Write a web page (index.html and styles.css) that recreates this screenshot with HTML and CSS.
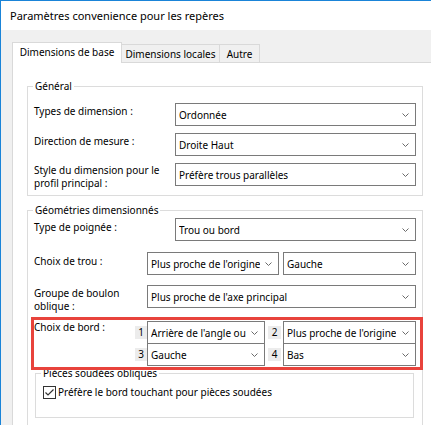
FILE: index.html
```html
<!DOCTYPE html>
<html lang="fr">
<head>
<meta charset="utf-8">
<title>Paramètres convenience pour les repères</title>
<link rel="stylesheet" href="styles.css">
</head>
<body>
<div class="window">
  <div class="titlebar">Paramètres convenience pour les repères</div>
  <div class="client">
    <div class="tabs">
      <div class="tab active">Dimensions de base</div>
      <div class="tab t2">Dimensions locales</div>
      <div class="tab t3">Autre</div>
    </div>
    <div class="panel">
      <fieldset class="group general">
        <legend>Général</legend>
        <div class="row">
          <div class="lbl w141 pt2">Types de dimension :</div>
          <div class="select grow"><span>Ordonnée</span><svg class="chev" width="7" height="4" viewBox="0 0 7 4"><path d="M0.5 0.5L3.5 3.5L6.5 0.5"/></svg></div>
        </div>
        <div class="row mt7">
          <div class="lbl w141 pt2">Direction de mesure :</div>
          <div class="select grow"><span>Droite Haut</span><svg class="chev" width="7" height="4" viewBox="0 0 7 4"><path d="M0.5 0.5L3.5 3.5L6.5 0.5"/></svg></div>
        </div>
        <div class="row mt7">
          <div class="lbl w141 pt1">Style du dimension pour le<br>profil principal :</div>
          <div class="select grow"><span>Préfère trous parallèles</span><svg class="chev" width="7" height="4" viewBox="0 0 7 4"><path d="M0.5 0.5L3.5 3.5L6.5 0.5"/></svg></div>
        </div>
      </fieldset>

      <fieldset class="group geo">
        <legend>Géométries dimensionnés</legend>
        <div class="row">
          <div class="lbl w141 pt3">Type de poignée :</div>
          <div class="select grow"><span>Trou ou bord</span><svg class="chev" width="7" height="4" viewBox="0 0 7 4"><path d="M0.5 0.5L3.5 3.5L6.5 0.5"/></svg></div>
        </div>
        <div class="row mt11">
          <div class="lbl w113 pt3">Choix de trou :</div>
          <div class="select w132"><span>Plus proche de l'origine</span><svg class="chev" width="7" height="4" viewBox="0 0 7 4"><path d="M0.5 0.5L3.5 3.5L6.5 0.5"/></svg></div>
          <div class="select grow ml4"><span>Gauche</span><svg class="chev" width="7" height="4" viewBox="0 0 7 4"><path d="M0.5 0.5L3.5 3.5L6.5 0.5"/></svg></div>
        </div>
        <div class="row mt10 h28">
          <div class="lbl w113 pt2">Groupe de boulon<br>oblique :</div>
          <div class="select grow"><span>Plus proche de l'axe principal</span><svg class="chev" width="7" height="4" viewBox="0 0 7 4"><path d="M0.5 0.5L3.5 3.5L6.5 0.5"/></svg></div>
        </div>
        <div class="row mt8 edge">
          <div class="lbl w101">Choix de bord :</div>
          <div class="edgegrid">
            <div class="erow">
              <div class="num n1">1</div>
              <div class="select w118"><span>Arrière de l'angle ou</span><svg class="chev" width="7" height="4" viewBox="0 0 7 4"><path d="M0.5 0.5L3.5 3.5L6.5 0.5"/></svg></div>
              <div class="num n2">2</div>
              <div class="select grow"><span>Plus proche de l'origine</span><svg class="chev" width="7" height="4" viewBox="0 0 7 4"><path d="M0.5 0.5L3.5 3.5L6.5 0.5"/></svg></div>
            </div>
            <div class="erow second">
              <div class="num n1">3</div>
              <div class="select w118"><span>Gauche</span><svg class="chev" width="7" height="4" viewBox="0 0 7 4"><path d="M0.5 0.5L3.5 3.5L6.5 0.5"/></svg></div>
              <div class="num n2">4</div>
              <div class="select grow"><span>Bas</span><svg class="chev" width="7" height="4" viewBox="0 0 7 4"><path d="M0.5 0.5L3.5 3.5L6.5 0.5"/></svg></div>
            </div>
          </div>
          <div class="highlight"></div>
        </div>
        <fieldset class="group sub">
          <legend>Pièces soudées obliques</legend>
          <div class="check">
            <span class="box"><svg width="11" height="11" viewBox="0 0 11 11"><path d="M1.5 5.5L4 8L9.5 2.5"/></svg></span>
            <span>Préfère le bord touchant pour pièces soudées</span>
          </div>
        </fieldset>
      </fieldset>
    </div>
  </div>
</div>
</body>
</html>
```

FILE: styles.css
```css
* { box-sizing: border-box; }
html, body { margin: 0; padding: 0; }
body {
  width: 431px;
  height: 425px;
  overflow: hidden;
  background: #ffffff;
  font-family: "Noto Sans", "Open Sans", sans-serif;
  font-size: 10px;
  color: #000;
}
.window {
  width: 431px;
  height: 425px;
  overflow: hidden;
  border-left: 1px solid #1a84d8;
  border-top: 1px solid #1a84d8;
  background: #f0f0f0;
}
.titlebar {
  height: 29px;
  line-height: 29px;
  padding-left: 9px;
  background: #fff;
  font-size: 11px;
  white-space: nowrap;
}
.client {
  padding: 12px 0 0 11px;
  background: #f0f0f0;
}
.tabs {
  display: flex;
  align-items: flex-end;
  height: 20px;
}
.tab {
  height: 18px;
  line-height: 18px;
  border-top: 1px solid #d9d9d9;
  border-right: 1px solid #d9d9d9;
  background: #f0f0f0;
  text-align: center;
  white-space: nowrap;
}
.tab.active {
  position: relative;
  z-index: 1;
  width: 110px;
  height: 21px;
  line-height: 19px;
  margin-bottom: -1px;
  border-left: 1px solid #d9d9d9;
  background: #fff;
}
.tab.t2 { width: 98px; }
.tab.t3 { width: 40px; }
.panel {
  width: 460px;
  height: 400px;
  background: #fff;
  border: 1px solid #d9d9d9;
  padding-left: 14px;
}
.group {
  margin: 0;
  min-width: 0;
  border: 1px solid #dcdcdc;
  padding: 0 6px 5px 6px;
}
.group legend {
  padding: 0 2px;
  margin-left: -1px;
  line-height: 15px;
  height: 15px;
}
.general {
  width: 396px;
  margin-top: 16px;
  padding-top: 9px;
}
.geo {
  width: 396px;
  margin-top: 7px;
  padding-bottom: 40px;
}
.row {
  display: flex;
  align-items: flex-start;
}
.h28 { height: 28px; }
.mt7 { margin-top: 7px; }
.mt8 { margin-top: 8px; }
.mt10 { margin-top: 10px; }
.mt11 { margin-top: 11px; }
.ml4 { margin-left: 4px; }
.pt1 { padding-top: 1px; }
.pt2 { padding-top: 2px; }
.pt3 { padding-top: 3px; }
.lbl {
  flex: none;
  line-height: 13px;
  white-space: nowrap;
}
.w141 { width: 141px; }
.w113 { width: 113px; }
.w101 { width: 101px; }
.w132 { width: 132px; flex: none; }
.w118 { width: 118px; flex: none; }
.grow { flex: 1; min-width: 0; }
.select {
  display: flex;
  align-items: center;
  justify-content: space-between;
  height: 23px;
  border: 1px solid #7a7a7a;
  background: #fff;
  padding: 0 6px 0 3px;
  white-space: nowrap;
  overflow: hidden;
}
.select span {
  overflow: hidden;
  min-width: 0;
}
.chev {
  flex: none;
  margin-left: 4px;
}
.chev path {
  fill: none;
  stroke: #6a6a6a;
  stroke-width: 1;
}
.edge {
  position: relative;
}
.edgegrid {
  flex: 1;
  display: flex;
  flex-direction: column;
}
.erow {
  display: flex;
  align-items: center;
}
.erow.second { margin-top: -1px; }
.num {
  flex: none;
  height: 13px;
  line-height: 13px;
  background: #ececec;
  text-align: center;
}
.n1 { width: 12px; }
.n2 { width: 13px; margin-left: 3px; margin-right: 2px; }
.highlight {
  position: absolute;
  left: -3px;
  top: -4px;
  right: -7px;
  bottom: -4px;
  border: 3px solid #e8433c;
  z-index: 2;
  pointer-events: none;
}
.sub {
  width: 379px;
  margin: 0 0 0 1px;
  padding: 5px 7px 18px 7px;
}
.sub legend { margin-left: -2px; }
.check {
  display: flex;
  align-items: center;
  line-height: 13px;
}
.box {
  width: 13px;
  height: 13px;
  border: 1px solid #333;
  background: #fff;
  display: flex;
  align-items: center;
  justify-content: center;
  margin-right: 2px;
}
.box path {
  fill: none;
  stroke: #333;
  stroke-width: 1.2;
}
```
